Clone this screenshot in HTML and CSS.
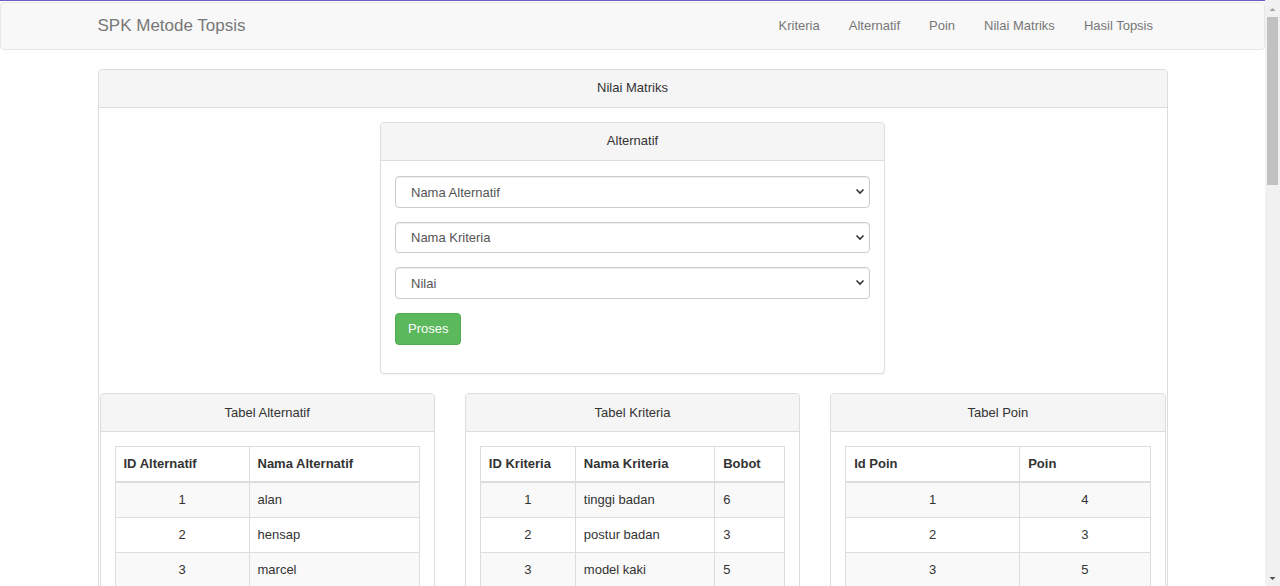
FILE: index.html
```html
<!DOCTYPE html>
<html lang="id">
<head>
<meta charset="utf-8">
<title>SPK Metode Topsis</title>
<link rel="stylesheet" href="styles.css">
</head>
<body>
<div class="topline"></div>
<div class="page">
  <nav class="navbar">
    <div class="container nav-inner">
      <a class="brand" href="#">SPK Metode Topsis</a>
      <ul class="nav-links">
        <li><a href="#">Kriteria</a></li>
        <li><a href="#">Alternatif</a></li>
        <li><a href="#">Poin</a></li>
        <li><a href="#">Nilai Matriks</a></li>
        <li><a href="#">Hasil Topsis</a></li>
      </ul>
    </div>
  </nav>

  <div class="container">
    <div class="panel main-panel">
      <div class="panel-heading">Nilai Matriks</div>
      <div class="main-body">
        <div class="panel form-panel">
          <div class="panel-heading">Alternatif</div>
          <form class="form-body">
            <div class="select-wrap">
              <select class="form-select"><option>Nama Alternatif</option></select>
              <svg class="chev" width="10" height="7" viewBox="0 0 10 7"><path d="M1.5 1.5 L5 5 L8.5 1.5" fill="none" stroke="#333" stroke-width="1.6"/></svg>
            </div>
            <div class="select-wrap">
              <select class="form-select"><option>Nama Kriteria</option></select>
              <svg class="chev" width="10" height="7" viewBox="0 0 10 7"><path d="M1.5 1.5 L5 5 L8.5 1.5" fill="none" stroke="#333" stroke-width="1.6"/></svg>
            </div>
            <div class="select-wrap">
              <select class="form-select"><option>Nilai</option></select>
              <svg class="chev" width="10" height="7" viewBox="0 0 10 7"><path d="M1.5 1.5 L5 5 L8.5 1.5" fill="none" stroke="#333" stroke-width="1.6"/></svg>
            </div>
            <button type="button" class="btn-success">Proses</button>
          </form>
        </div>

        <div class="table-row">
          <div class="panel">
            <div class="panel-heading">Tabel Alternatif</div>
            <div class="panel-body">
              <table class="tbl tbl-alt">
                <thead><tr><th>ID Alternatif</th><th>Nama Alternatif</th></tr></thead>
                <tbody>
                  <tr><td class="c">1</td><td>alan</td></tr>
                  <tr><td class="c">2</td><td>hensap</td></tr>
                  <tr><td class="c">3</td><td>marcel</td></tr>
                </tbody>
              </table>
            </div>
          </div>
          <div class="panel">
            <div class="panel-heading">Tabel Kriteria</div>
            <div class="panel-body">
              <table class="tbl tbl-krit">
                <thead><tr><th>ID Kriteria</th><th>Nama Kriteria</th><th>Bobot</th></tr></thead>
                <tbody>
                  <tr><td class="c">1</td><td>tinggi badan</td><td>6</td></tr>
                  <tr><td class="c">2</td><td>postur badan</td><td>3</td></tr>
                  <tr><td class="c">3</td><td>model kaki</td><td>5</td></tr>
                </tbody>
              </table>
            </div>
          </div>
          <div class="panel">
            <div class="panel-heading">Tabel Poin</div>
            <div class="panel-body">
              <table class="tbl tbl-poin">
                <thead><tr><th>Id Poin</th><th>Poin</th></tr></thead>
                <tbody>
                  <tr><td class="c">1</td><td class="c">4</td></tr>
                  <tr><td class="c">2</td><td class="c">3</td></tr>
                  <tr><td class="c">3</td><td class="c">5</td></tr>
                </tbody>
              </table>
            </div>
          </div>
        </div>
      </div>
    </div>
  </div>
</div>

<div class="scrollbar" aria-hidden="true">
  <svg class="sb-arrow sb-up" width="15" height="15" viewBox="0 0 15 15"><path d="M4.5 9 L7.5 6 L10.5 9 Z" fill="#a3a3a3"/></svg>
  <div class="sb-thumb"></div>
  <svg class="sb-arrow sb-down" width="15" height="15" viewBox="0 0 15 15"><path d="M4.5 6 L7.5 9 L10.5 6 Z" fill="#505050"/></svg>
</div>
</body>
</html>
```

FILE: styles.css
```css
html {
  overflow: hidden;
}

body {
  margin: 0;
  font-family: "Liberation Sans", Arial, Helvetica, sans-serif;
  font-size: 13px;
  line-height: 1.42857;
  color: #333;
  background: #fff;
}

.topline {
  height: 1px;
  background: #6a5cc4;
  margin-bottom: 1px;
}

.page {
  margin-right: 15px;
}

.container {
  width: 1070px;
  margin: 0 auto;
}

/* navbar */
.navbar {
  height: 48px;
  box-sizing: border-box;
  background: #f8f8f8;
  border: 1px solid #e7e7e7;
  border-radius: 4px;
  margin-bottom: 19px;
}

.nav-inner {
  display: flex;
  align-items: center;
  justify-content: space-between;
  height: 46px;
}

.brand {
  color: #777;
  font-size: 17px;
  text-decoration: none;
  line-height: 20px;
}

.nav-links {
  display: flex;
  list-style: none;
  margin: 0;
  padding: 0;
}

.nav-links a {
  display: block;
  padding: 0 14.5px;
  color: #777;
  text-decoration: none;
  line-height: 20px;
}

/* panels */
.panel {
  background: #fff;
  border: 1px solid #ddd;
  border-radius: 4px;
  box-shadow: 0 1px 1px rgba(0, 0, 0, .05);
}

.panel-heading {
  background: #f5f5f5;
  border-bottom: 1px solid #ddd;
  border-radius: 3px 3px 0 0;
  padding: 9.3px 15px;
  text-align: center;
  color: #333;
}

.main-body {
  padding: 14px 1px 20px;
}

.form-panel {
  width: 503px;
  margin: 0 auto;
}

.form-body {
  padding: 15px 14px 28.5px;
}

.select-wrap {
  position: relative;
  margin-bottom: 14px;
}

.form-select {
  display: block;
  width: 100%;
  height: 31.5px;
  box-sizing: border-box;
  padding: 0 15px;
  font-family: inherit;
  font-size: 13px;
  color: #555;
  background: #fff;
  border: 1px solid #ccc;
  border-radius: 4px;
  box-shadow: inset 0 1px 1px rgba(0, 0, 0, .075);
  -webkit-appearance: none;
  appearance: none;
}

.chev {
  position: absolute;
  right: 5px;
  top: 12px;
  pointer-events: none;
}

.btn-success {
  display: block;
  height: 32px;
  padding: 0 12px;
  font-family: inherit;
  font-size: 13px;
  color: #fff;
  background: #5cb85c;
  border: 1px solid #4cae4c;
  border-radius: 4px;
}

.table-row {
  display: grid;
  grid-template-columns: repeat(3, 1fr);
  column-gap: 30px;
  margin-top: 19px;
}

.panel-body {
  padding: 14px 14px 20px;
}

/* tables */
.tbl {
  width: 100%;
  border-collapse: collapse;
  border: 1px solid #ddd;
  line-height: 18px;
}

.tbl th,
.tbl td {
  padding: 8px;
  border: 1px solid #ddd;
  text-align: left;
  vertical-align: top;
}

.tbl th {
  font-weight: bold;
  border-bottom: 2px solid #ddd;
}

.tbl td.c {
  text-align: center;
}

.tbl tbody tr:nth-child(odd) {
  background: #f9f9f9;
}

.tbl-alt th:nth-child(1) { width: 134px; box-sizing: border-box; }
.tbl-krit th:nth-child(1) { width: 95px; box-sizing: border-box; }
.tbl-krit th:nth-child(3) { width: 70px; box-sizing: border-box; }
.tbl-poin th:nth-child(1) { width: 174px; box-sizing: border-box; }

/* fake scrollbar */
.scrollbar {
  position: fixed;
  top: 0;
  right: 0;
  width: 15px;
  height: 100%;
  background: #f1f1f1;
}

.sb-arrow {
  position: absolute;
  left: 0;
}

.sb-up { top: 2px; }
.sb-down { bottom: 0; }

.sb-thumb {
  position: absolute;
  top: 17px;
  left: 2px;
  width: 11px;
  height: 168px;
  background: #c1c1c1;
}
```
